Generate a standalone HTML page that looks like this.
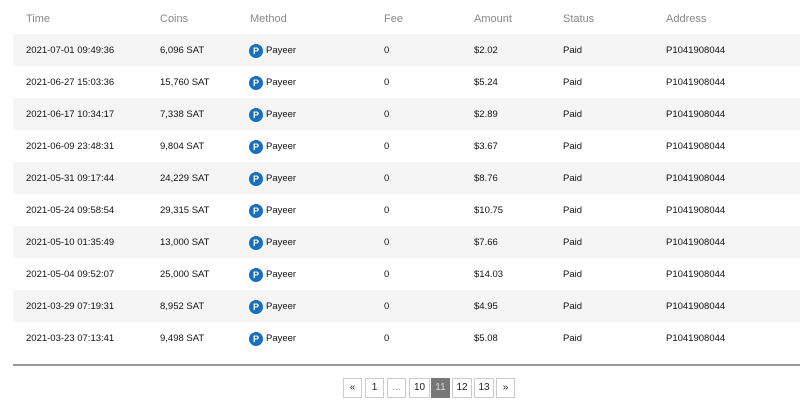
<!DOCTYPE html>
<html><head><style>
*{margin:0;padding:0;box-sizing:border-box}
body{width:800px;height:400px;background:#fff;font-family:"Liberation Sans",sans-serif;position:relative;overflow:hidden}
.h{position:absolute;top:13px;font-size:11px;color:#888}
.row{position:absolute;left:13px;width:787px;height:32px}
.row.s{background:#f5f5f5}
.c{position:absolute;top:11px;font-size:9.5px;color:#111}
.ic{position:absolute;left:236px;top:10px;width:14px;height:14px;border-radius:50%;background:#1b6fb8;color:#fff;font-size:9px;font-weight:bold;text-align:center;line-height:14px}
.line{position:absolute;left:13px;width:787px;top:364px;height:2px;background:#999}
.pg{position:absolute;top:378px;height:20px;border:1px solid #ccc;font-size:10px;text-align:center;line-height:18px;color:#222;background:#fff}
.pg.a{background:#777;color:#ddd;border-color:#777}
</style></head><body>
<div class="h" style="left:26px">Time</div>
<div class="h" style="left:160px">Coins</div>
<div class="h" style="left:250px">Method</div>
<div class="h" style="left:384px">Fee</div>
<div class="h" style="left:474px">Amount</div>
<div class="h" style="left:563px">Status</div>
<div class="h" style="left:666px">Address</div>

<div class="row s" style="top:34px"><span class="c" style="left:13px">2021-07-01 09:49:36</span><span class="c" style="left:147px">6,096 SAT</span><span class="ic">P</span><span class="c" style="left:253px">Payeer</span><span class="c" style="left:371px">0</span><span class="c" style="left:461px">$2.02</span><span class="c" style="left:550px">Paid</span><span class="c" style="left:653px">P1041908044</span></div>
<div class="row" style="top:66px"><span class="c" style="left:13px">2021-06-27 15:03:36</span><span class="c" style="left:147px">15,760 SAT</span><span class="ic">P</span><span class="c" style="left:253px">Payeer</span><span class="c" style="left:371px">0</span><span class="c" style="left:461px">$5.24</span><span class="c" style="left:550px">Paid</span><span class="c" style="left:653px">P1041908044</span></div>
<div class="row s" style="top:98px"><span class="c" style="left:13px">2021-06-17 10:34:17</span><span class="c" style="left:147px">7,338 SAT</span><span class="ic">P</span><span class="c" style="left:253px">Payeer</span><span class="c" style="left:371px">0</span><span class="c" style="left:461px">$2.89</span><span class="c" style="left:550px">Paid</span><span class="c" style="left:653px">P1041908044</span></div>
<div class="row" style="top:130px"><span class="c" style="left:13px">2021-06-09 23:48:31</span><span class="c" style="left:147px">9,804 SAT</span><span class="ic">P</span><span class="c" style="left:253px">Payeer</span><span class="c" style="left:371px">0</span><span class="c" style="left:461px">$3.67</span><span class="c" style="left:550px">Paid</span><span class="c" style="left:653px">P1041908044</span></div>
<div class="row s" style="top:162px"><span class="c" style="left:13px">2021-05-31 09:17:44</span><span class="c" style="left:147px">24,229 SAT</span><span class="ic">P</span><span class="c" style="left:253px">Payeer</span><span class="c" style="left:371px">0</span><span class="c" style="left:461px">$8.76</span><span class="c" style="left:550px">Paid</span><span class="c" style="left:653px">P1041908044</span></div>
<div class="row" style="top:194px"><span class="c" style="left:13px">2021-05-24 09:58:54</span><span class="c" style="left:147px">29,315 SAT</span><span class="ic">P</span><span class="c" style="left:253px">Payeer</span><span class="c" style="left:371px">0</span><span class="c" style="left:461px">$10.75</span><span class="c" style="left:550px">Paid</span><span class="c" style="left:653px">P1041908044</span></div>
<div class="row s" style="top:226px"><span class="c" style="left:13px">2021-05-10 01:35:49</span><span class="c" style="left:147px">13,000 SAT</span><span class="ic">P</span><span class="c" style="left:253px">Payeer</span><span class="c" style="left:371px">0</span><span class="c" style="left:461px">$7.66</span><span class="c" style="left:550px">Paid</span><span class="c" style="left:653px">P1041908044</span></div>
<div class="row" style="top:258px"><span class="c" style="left:13px">2021-05-04 09:52:07</span><span class="c" style="left:147px">25,000 SAT</span><span class="ic">P</span><span class="c" style="left:253px">Payeer</span><span class="c" style="left:371px">0</span><span class="c" style="left:461px">$14.03</span><span class="c" style="left:550px">Paid</span><span class="c" style="left:653px">P1041908044</span></div>
<div class="row s" style="top:290px"><span class="c" style="left:13px">2021-03-29 07:19:31</span><span class="c" style="left:147px">8,952 SAT</span><span class="ic">P</span><span class="c" style="left:253px">Payeer</span><span class="c" style="left:371px">0</span><span class="c" style="left:461px">$4.95</span><span class="c" style="left:550px">Paid</span><span class="c" style="left:653px">P1041908044</span></div>
<div class="row" style="top:322px"><span class="c" style="left:13px">2021-03-23 07:13:41</span><span class="c" style="left:147px">9,498 SAT</span><span class="ic">P</span><span class="c" style="left:253px">Payeer</span><span class="c" style="left:371px">0</span><span class="c" style="left:461px">$5.08</span><span class="c" style="left:550px">Paid</span><span class="c" style="left:653px">P1041908044</span></div>

<div class="line"></div>
<div class="pg" style="left:343px;width:19px">«</div>
<div class="pg" style="left:365px;width:19px">1</div>
<div class="pg" style="left:387px;width:19px;color:#999">…</div>
<div class="pg" style="left:409px;width:21px">10</div>
<div class="pg a" style="left:431px;width:19px">11</div>
<div class="pg" style="left:452px;width:20px">12</div>
<div class="pg" style="left:474px;width:20px">13</div>
<div class="pg" style="left:496px;width:19px">»</div>
</body></html>
